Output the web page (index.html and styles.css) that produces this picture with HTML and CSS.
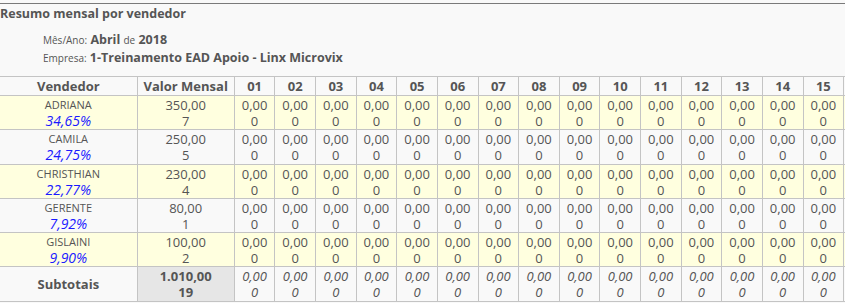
FILE: index.html
```html
<!DOCTYPE html>
<html lang="pt-BR">
<head>
<meta charset="utf-8">
<title>Resumo mensal por vendedor</title>
<link rel="stylesheet" href="styles.css">
</head>
<body>
<div class="page">
  <div class="report-head">
    <h1 class="title">Resumo mensal por vendedor</h1>
    <div class="info">
      <div class="info-line"><span class="lbl">Mês/Ano:</span> <b>Abril</b> <span class="lbl">de</span> <b>2018</b></div>
      <div class="info-line"><span class="lbl">Empresa:</span> <b>1-Treinamento EAD Apoio - Linx Microvix</b></div>
    </div>
  </div>
  <div class="table-wrap">
    <table class="grid">
      <colgroup>
        <col class="c-vend"><col class="c-valor">
        <col class="c-day"><col class="c-day"><col class="c-day"><col class="c-day">
        <col class="c-day"><col class="c-day"><col class="c-day"><col class="c-day">
        <col class="c-day"><col class="c-day"><col class="c-day"><col class="c-day">
        <col class="c-day"><col class="c-day"><col class="c-day"><col class="c-day">
      </colgroup>
      <thead>
        <tr>
          <th class="first">Vendedor</th><th>Valor Mensal</th>
          <th>01</th><th>02</th><th>03</th><th>04</th><th>05</th><th>06</th><th>07</th><th>08</th>
          <th>09</th><th>10</th><th>11</th><th>12</th><th>13</th><th>14</th><th>15</th><th>16</th>
        </tr>
      </thead>
      <tbody id="rows"></tbody>
    </table>
  </div>
</div>
<script>
  var data = [
    ["ADRIANA", "34,65%", "350,00", "7"],
    ["CAMILA", "24,75%", "250,00", "5"],
    ["CHRISTHIAN", "22,77%", "230,00", "4"],
    ["GERENTE", "7,92%", "80,00", "1"],
    ["GISLAINI", "9,90%", "100,00", "2"]
  ];
  var html = "";
  data.forEach(function (r, i) {
    html += '<tr class="' + (i % 2 === 0 ? "odd" : "even") + '">';
    html += '<td class="first"><span class="ln name">' + r[0] + '</span><span class="ln pct">' + r[1] + '</span></td>';
    html += '<td><span class="ln">' + r[2] + '</span><span class="ln">' + r[3] + '</span></td>';
    for (var d = 0; d < 16; d++) html += '<td><span class="ln">0,00</span><span class="ln">0</span></td>';
    html += '</tr>';
  });
  html += '<tr class="total"><td class="first sub">Subtotais</td><td class="sum"><span class="ln">1.010,00</span><span class="ln">19</span></td>';
  for (var d = 0; d < 16; d++) html += '<td class="it"><span class="ln">0,00</span><span class="ln">0</span></td>';
  html += '</tr>';
  document.getElementById("rows").innerHTML = html;
</script>
</body>
</html>
```
FILE: styles.css
```css
html, body {
  margin: 0;
  padding: 0;
  background: #f9f9f9;
  overflow: hidden;
}
body {
  font-family: "Open Sans", "Noto Sans", sans-serif;
  color: #555;
}
.page {
  padding-top: 3px;
}
.report-head {
  border-top: 1px solid #7a7a7a;
}
.title {
  margin: 0;
  padding: 2px 0 0 0;
  font-size: 12.5px;
  line-height: 16px;
  font-weight: bold;
  color: #555;
}
.info {
  padding: 9px 0 0 43px;
  height: 43px;
  box-sizing: border-box;
}
.info-line {
  font-size: 12.5px;
  line-height: 17px;
  color: #555;
}
.info-line .lbl {
  font-size: 10px;
}
.info-line b {
  font-weight: bold;
}
.table-wrap {
  overflow: hidden;
  width: 845px;
  margin-top: 11px;
}
.grid {
  border-collapse: collapse;
  table-layout: fixed;
  width: 885px;
  font-size: 13px;
}
.c-vend { width: 137px; }
.c-valor { width: 97px; }
.c-day { width: 40.6px; }
.grid th, .grid td {
  border: 1px solid #c4c4c4;
  text-align: center;
  padding: 0;
  overflow: hidden;
  white-space: nowrap;
}
.grid .first {
  border-left: none;
}
.grid th {
  font-weight: bold;
  line-height: 18px;
  color: #555;
}
.grid td {
  padding: 1px 0 0.3px 0;
  color: #555;
  height: 32px;
  line-height: 16px;
  box-sizing: content-box;
}
.ln {
  display: block;
  height: 16px;
  line-height: 16px;
}
tr.odd td { background: #ffffdf; }
tr.even td { background: #f9f9f9; }
.name {
  font-size: 11px;
  color: #555;
}
.pct {
  font-style: italic;
  color: #1a1aff;
  font-size: 14px;
}
.total td {
  background: #f9f9f9;
}
.total .sub {
  font-weight: bold;
}
.total .sum {
  background: #e6e6e6;
  font-weight: bold;
}
.total .it {
  font-style: italic;
}
```
